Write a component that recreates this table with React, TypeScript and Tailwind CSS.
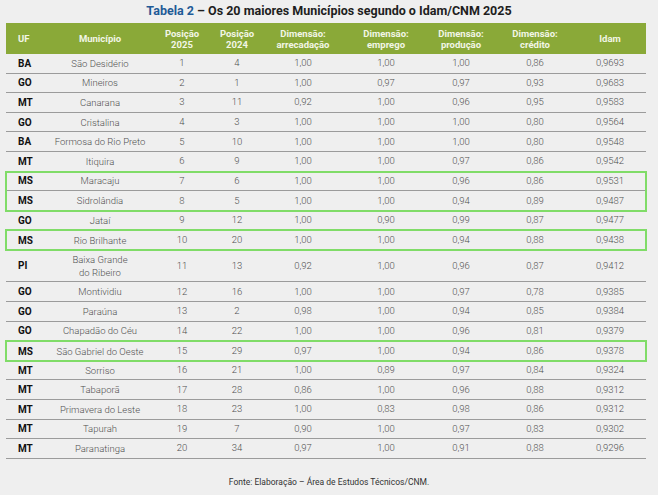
import React from "react";

type Row = {
  uf: string;
  mun: string;
  p25: string;
  p24: string;
  arr: string;
  emp: string;
  prod: string;
  cred: string;
  idam: string;
};

const rows: Row[] = [
  { uf: "BA", mun: "São Desidério", p25: "1", p24: "4", arr: "1,00", emp: "1,00", prod: "1,00", cred: "0,86", idam: "0,9693" },
  { uf: "GO", mun: "Mineiros", p25: "2", p24: "1", arr: "1,00", emp: "0,97", prod: "0,97", cred: "0,93", idam: "0,9683" },
  { uf: "MT", mun: "Canarana", p25: "3", p24: "11", arr: "0,92", emp: "1,00", prod: "0,96", cred: "0,95", idam: "0,9583" },
  { uf: "GO", mun: "Cristalina", p25: "4", p24: "3", arr: "1,00", emp: "1,00", prod: "1,00", cred: "0,80", idam: "0,9564" },
  { uf: "BA", mun: "Formosa do Rio Preto", p25: "5", p24: "10", arr: "1,00", emp: "1,00", prod: "1,00", cred: "0,80", idam: "0,9548" },
  { uf: "MT", mun: "Itiquira", p25: "6", p24: "9", arr: "1,00", emp: "1,00", prod: "0,97", cred: "0,86", idam: "0,9542" },
  { uf: "MS", mun: "Maracaju", p25: "7", p24: "6", arr: "1,00", emp: "1,00", prod: "0,96", cred: "0,86", idam: "0,9531" },
  { uf: "MS", mun: "Sidrolândia", p25: "8", p24: "5", arr: "1,00", emp: "1,00", prod: "0,94", cred: "0,89", idam: "0,9487" },
  { uf: "GO", mun: "Jataí", p25: "9", p24: "12", arr: "1,00", emp: "0,90", prod: "0,99", cred: "0,87", idam: "0,9477" },
  { uf: "MS", mun: "Rio Brilhante", p25: "10", p24: "20", arr: "1,00", emp: "1,00", prod: "0,94", cred: "0,88", idam: "0,9438" },
  { uf: "PI", mun: "Baixa Grande do Ribeiro", p25: "11", p24: "13", arr: "0,92", emp: "1,00", prod: "0,96", cred: "0,87", idam: "0,9412" },
  { uf: "GO", mun: "Montividiu", p25: "12", p24: "16", arr: "1,00", emp: "1,00", prod: "0,97", cred: "0,78", idam: "0,9385" },
  { uf: "GO", mun: "Paraúna", p25: "13", p24: "2", arr: "0,98", emp: "1,00", prod: "0,94", cred: "0,85", idam: "0,9384" },
  { uf: "GO", mun: "Chapadão do Céu", p25: "14", p24: "22", arr: "1,00", emp: "1,00", prod: "0,96", cred: "0,81", idam: "0,9379" },
  { uf: "MS", mun: "São Gabriel do Oeste", p25: "15", p24: "29", arr: "0,97", emp: "1,00", prod: "0,94", cred: "0,86", idam: "0,9378" },
  { uf: "MT", mun: "Sorriso", p25: "16", p24: "21", arr: "1,00", emp: "0,89", prod: "0,97", cred: "0,84", idam: "0,9324" },
  { uf: "MT", mun: "Tabaporã", p25: "17", p24: "28", arr: "0,86", emp: "1,00", prod: "0,96", cred: "0,88", idam: "0,9312" },
  { uf: "MT", mun: "Primavera do Leste", p25: "18", p24: "23", arr: "1,00", emp: "0,83", prod: "0,98", cred: "0,86", idam: "0,9312" },
  { uf: "MT", mun: "Tapurah", p25: "19", p24: "7", arr: "0,90", emp: "1,00", prod: "0,97", cred: "0,83", idam: "0,9302" },
  { uf: "MT", mun: "Paranatinga", p25: "20", p24: "34", arr: "0,97", emp: "1,00", prod: "0,91", cred: "0,88", idam: "0,9296" },
];

// column widths: 44 100 64 46 86 80 70 78 72
const cols = "grid grid-cols-[44px_100px_64px_46px_86px_80px_70px_78px_72px]";

function DataRow({ r, last }: { r: Row; last?: boolean }) {
  const tall = r.mun.length > 20;
  return (
    <div
      className={`${cols} items-center text-center text-[9.5px] font-light text-[#505050] ${
        tall ? "h-[32.5px]" : "h-[19.6px]"
      } ${last ? "" : "border-b border-[#9b9b9b]"}`}
    >
      <div className="pl-3 text-left text-[10px] font-bold text-[#111]">{r.uf}</div>
      <div className={`leading-[13px] ${tall ? "px-5" : ""}`}>{r.mun}</div>
      <div>{r.p25}</div>
      <div>{r.p24}</div>
      <div>{r.arr}</div>
      <div>{r.emp}</div>
      <div>{r.prod}</div>
      <div>{r.cred}</div>
      <div>{r.idam}</div>
    </div>
  );
}

function Group({ items, highlight }: { items: Row[]; highlight?: boolean }) {
  return (
    <div className={highlight ? "outline-2 outline-[#80dc68] -outline-offset-1 relative z-10" : ""}>
      {items.map((r, i) => (
        <DataRow key={r.mun} r={r} last={highlight && i === items.length - 1} />
      ))}
    </div>
  );
}

export default function App() {
  const groups: { items: Row[]; highlight?: boolean }[] = [
    { items: rows.slice(0, 6) },
    { items: rows.slice(6, 8), highlight: true },
    { items: rows.slice(8, 9) },
    { items: rows.slice(9, 10), highlight: true },
    { items: rows.slice(10, 14) },
    { items: rows.slice(14, 15), highlight: true },
    { items: rows.slice(15, 20) },
  ];

  return (
    <div
      className="w-[658px] h-[495px] bg-[#efefef] overflow-hidden"
      style={{ fontFamily: "Roboto, 'Liberation Sans', sans-serif" }}
    >
      <div className="pt-[2px] text-center text-[12.5px] font-bold text-[#1e1e1e] h-[23px]">
        <span className="text-[#1f5b97]">Tabela 2</span> – Os 20 maiores Municípios segundo o Idam/CNM 2025
      </div>
      <div className="mx-[6px] w-[640px]">
        <div className={`${cols} h-[31px] items-center bg-[#8aa938] text-center text-[9.5px] font-bold leading-[11px] text-[#f2f6e6]`}>
          <div className="pl-3 text-left">UF</div>
          <div>Município</div>
          <div>Posição<br />2025</div>
          <div>Posição<br />2024</div>
          <div>Dimensão:<br />arrecadação</div>
          <div>Dimensão:<br />emprego</div>
          <div>Dimensão:<br />produção</div>
          <div>Dimensão:<br />crédito</div>
          <div>Idam</div>
        </div>
        {groups.map((g, i) => (
          <Group key={i} items={g.items} highlight={g.highlight} />
        ))}
      </div>
      <div className="mt-[17px] text-center text-[8.5px] text-[#333]">
        Fonte: Elaboração – Área de Estudos Técnicos/CNM.
      </div>
    </div>
  );
}
